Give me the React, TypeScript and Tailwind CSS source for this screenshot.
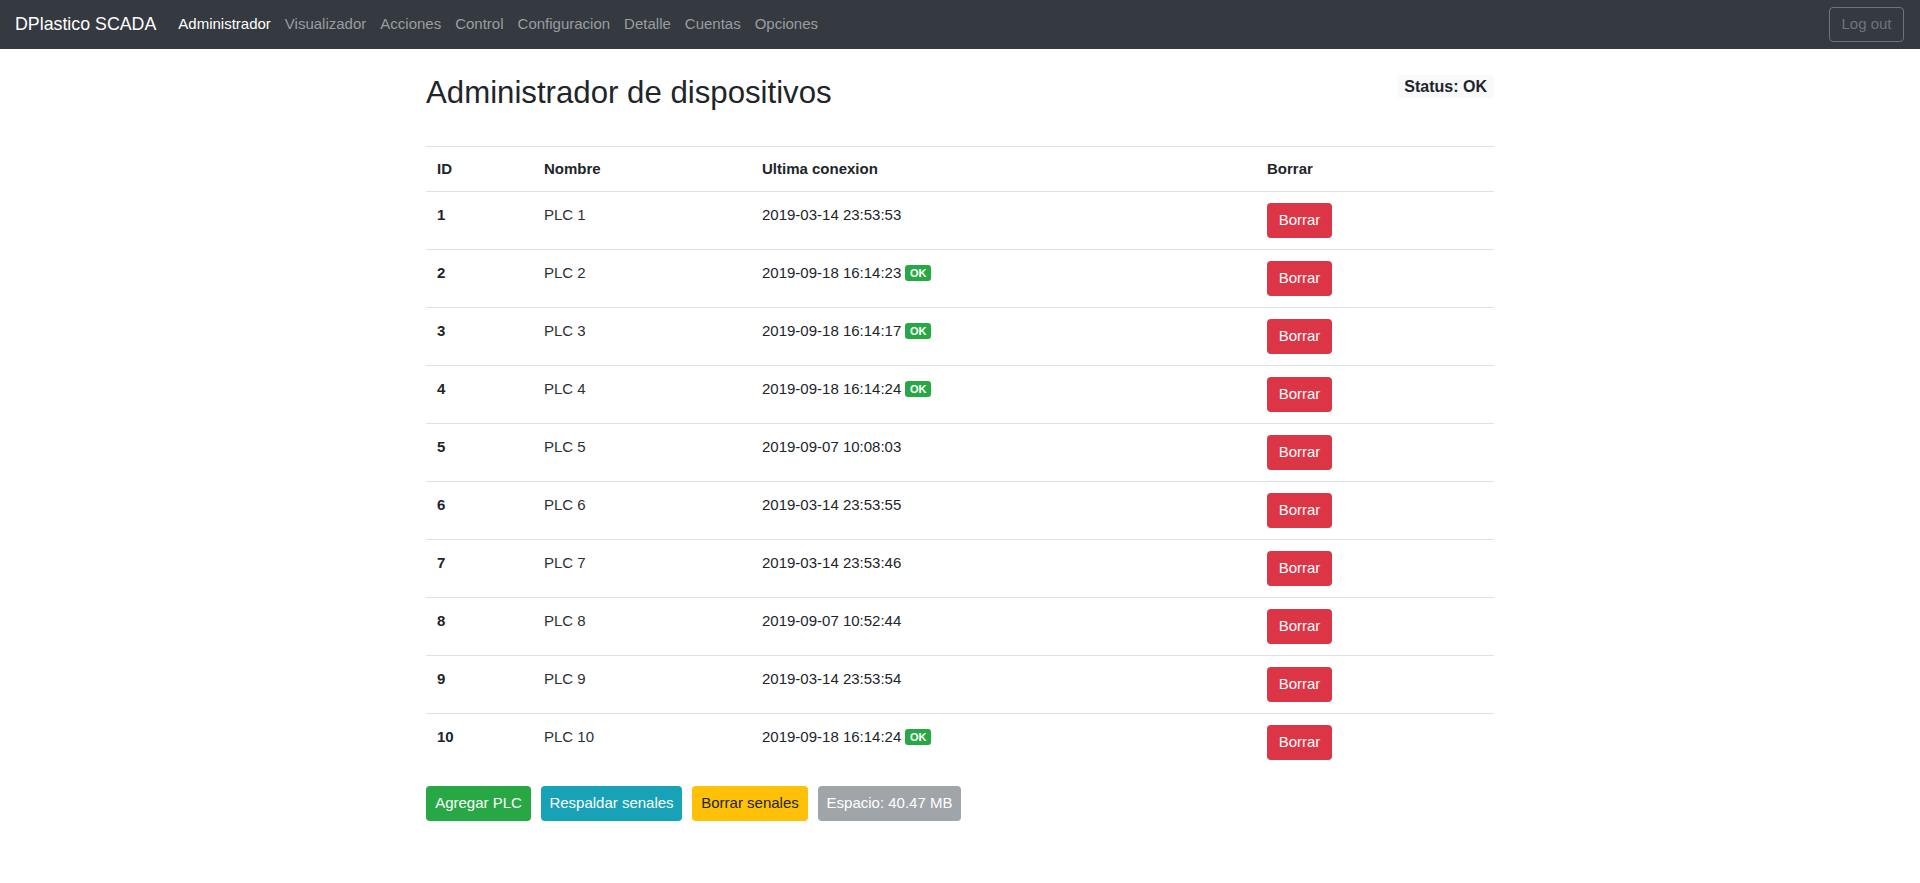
import React from "react";

// device list shown in the admin table
const devices = [
  { id: 1, name: "PLC 1", last: "2019-03-14 23:53:53", ok: false },
  { id: 2, name: "PLC 2", last: "2019-09-18 16:14:23", ok: true },
  { id: 3, name: "PLC 3", last: "2019-09-18 16:14:17", ok: true },
  { id: 4, name: "PLC 4", last: "2019-09-18 16:14:24", ok: true },
  { id: 5, name: "PLC 5", last: "2019-09-07 10:08:03", ok: false },
  { id: 6, name: "PLC 6", last: "2019-03-14 23:53:55", ok: false },
  { id: 7, name: "PLC 7", last: "2019-03-14 23:53:46", ok: false },
  { id: 8, name: "PLC 8", last: "2019-09-07 10:52:44", ok: false },
  { id: 9, name: "PLC 9", last: "2019-03-14 23:53:54", ok: false },
  { id: 10, name: "PLC 10", last: "2019-09-18 16:14:24", ok: true },
];

const links = [
  "Administrador",
  "Visualizador",
  "Acciones",
  "Control",
  "Configuracion",
  "Detalle",
  "Cuentas",
  "Opciones",
];

export default function App() {
  return (
    <div className="min-h-screen bg-white text-[#212529] font-['Liberation_Sans',Arial,sans-serif]">
      {/* Navbar */}
      <nav className="h-[49px] bg-[#343a40] flex items-center pl-[15px] pr-[16px]">
        <span className="text-[17.8px] text-white mr-[15px]">DPlastico SCADA</span>
        <div className="flex items-center">
          {links.map((l, i) => (
            <a
              key={l}
              className={
                "px-[7px] text-[15px] " +
                (i === 0 ? "text-white" : "text-[#9a9da0]")
              }
            >
              {l}
            </a>
          ))}
        </div>
        <button className="ml-auto w-[75px] h-[35px] border border-[#6c757d] rounded-[4px] text-[15px] text-[#6c757d]">
          Log out
        </button>
      </nav>

      {/* Content */}
      <div className="w-[1068px] ml-[426px] pt-[25px]">
        <div className="flex items-start justify-between">
          <h1 className="text-[31.2px] leading-[37px] font-normal">
            Administrador de dispositivos
          </h1>
          <span className="mt-[1px] px-[7px] text-[16px] leading-[23px] font-bold bg-[#f8f9fa] rounded-[4px]">
            Status: OK
          </span>
        </div>

        {/* Table */}
        <div className="mt-[35px] text-[15px]">
          <div className="grid grid-cols-[107px_218px_505px_1fr] border-t border-[#dee2e6] font-bold">
            <div className="px-[11px] py-[10px] leading-[24px]">ID</div>
            <div className="px-[11px] py-[10px] leading-[24px]">Nombre</div>
            <div className="px-[11px] py-[10px] leading-[24px]">Ultima conexion</div>
            <div className="px-[11px] py-[10px] leading-[24px]">Borrar</div>
          </div>
          {devices.map((d) => (
            <div
              key={d.id}
              className="grid grid-cols-[107px_218px_505px_1fr] border-t border-[#dee2e6]"
            >
              <div className="px-[11px] pt-[11px] leading-[24px] font-bold">{d.id}</div>
              <div className="px-[11px] pt-[11px] leading-[24px] text-[#2b3035]">{d.name}</div>
              <div className="px-[11px] pt-[11px] leading-[24px] flex items-center h-[35px] self-start">
                <span>{d.last}</span>
                {d.ok && (
                  <span className="ml-[4px] w-[26px] h-[16px] flex items-center justify-center rounded-[3px] bg-[#28a745] text-white text-[11px] font-bold leading-none">
                    OK
                  </span>
                )}
              </div>
              <div className="px-[11px] py-[11px]">
                <button className="w-[65px] h-[35px] rounded-[4px] bg-[#dc3545] text-white text-[15px]">
                  Borrar
                </button>
              </div>
            </div>
          ))}
        </div>

        {/* Actions */}
        <div className="mt-[15px] flex gap-[10px] text-[15px]">
          <button className="w-[105px] h-[35px] rounded-[4px] bg-[#28a745] text-white">
            Agregar PLC
          </button>
          <button className="w-[141px] h-[35px] rounded-[4px] bg-[#17a2b8] text-white">
            Respaldar senales
          </button>
          <button className="w-[116px] h-[35px] rounded-[4px] bg-[#ffc107] text-[#212529]">
            Borrar senales
          </button>
          <button className="w-[143px] h-[35px] rounded-[4px] bg-[#a0a5aa] text-white">
            Espacio: 40.47 MB
          </button>
        </div>
      </div>
    </div>
  );
}
